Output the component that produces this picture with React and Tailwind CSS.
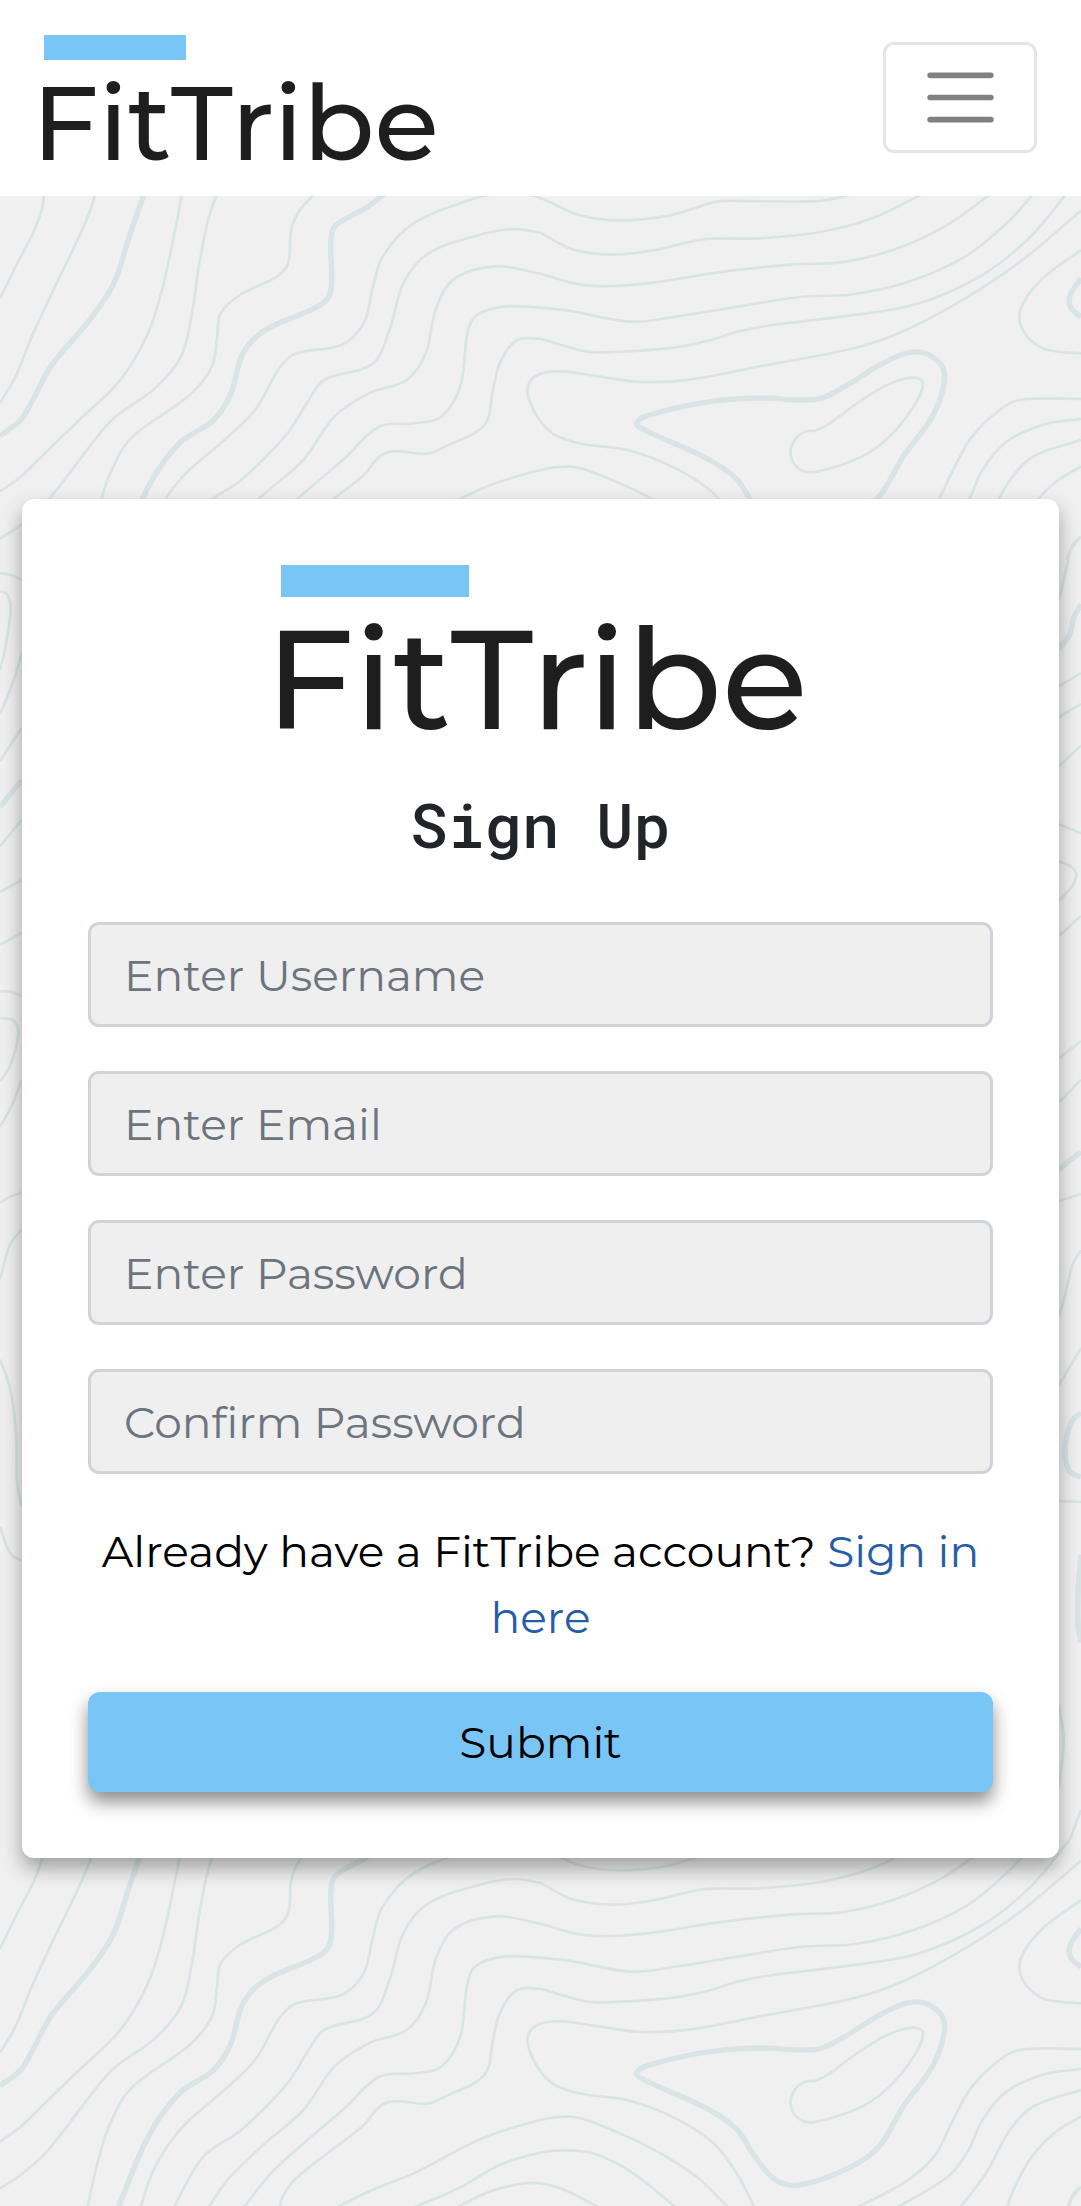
import React from "react";

// Contour lines of the topographic backdrop, as points on one tile.
const THIN = [
  [[130, 0], [122, 55], [100, 120], [50, 220], [0, 326]],
  [[280, 0], [262, 60], [225, 150], [150, 310], [90, 445], [45, 560], [0, 638]],
  [[530, 0], [510, 110], [470, 300], [425, 440], [345, 575], [230, 690], [130, 790], [60, 860], [0, 905]],
  [[634, 0], [605, 85], [580, 210], [555, 380], [525, 500], [450, 595], [330, 685], [260, 770], [140, 930], [60, 1005], [0, 1045], [-60, 1080]],
  [[925, 0], [870, 60], [845, 120], [836, 220], [800, 262], [700, 312], [640, 370], [630, 440], [615, 530], [550, 615], [380, 745], [320, 850], [285, 960], [250, 1120]],
  [[1450, 10], [1380, 24], [1200, 100], [1110, 200], [1080, 300], [1055, 400], [990, 465], [860, 490], [810, 535], [740, 660], [640, 760], [530, 860], [450, 980], [405, 1110]],
  [[1520, 10], [1568, 24], [1680, 75], [1800, 91], [1940, 77], [2080, 35], [2150, 33], [2360, 34], [2420, 26], [2500, 5]],
  [[1568, 128], [1490, 117], [1400, 132], [1240, 192], [1170, 280], [1130, 420], [1080, 522], [940, 570], [890, 640], [830, 735], [700, 870], [590, 950], [500, 1110]],
  [[1568, 128], [1660, 178], [1780, 194], [1900, 180], [2040, 148], [2200, 145], [2380, 126], [2530, 85], [2690, 5]],
  [[1568, 251], [1440, 229], [1320, 265], [1265, 355], [1235, 490], [1180, 570], [1070, 610], [970, 680], [880, 810], [760, 918], [660, 1020], [600, 1110]],
  [[1568, 251], [1680, 283], [1780, 288], [1900, 277], [2100, 245], [2300, 223], [2440, 217], [2590, 180], [2740, 110], [2890, 0]],
  [[1568, 353], [1460, 350], [1380, 378], [1356, 430], [1335, 590], [1280, 680], [1200, 700], [1100, 710], [1000, 805], [800, 985], [700, 1110]],
  [[1568, 353], [1650, 362], [1830, 395], [1960, 380], [2140, 350], [2320, 321], [2480, 312], [2640, 274], [2800, 200], [2920, 100], [3008, 0]],
  [[1568, 446], [1500, 450], [1450, 520], [1430, 600], [1405, 705], [1290, 770], [1240, 791], [1120, 788], [1050, 860], [870, 1005], [825, 1060], [805, 1120]],
  [[1568, 446], [1700, 484], [1780, 486], [1960, 472], [2070, 448], [2140, 425], [2240, 405], [2440, 380], [2660, 342], [2850, 255], [2990, 140], [3110, -10]],
  [[3136, 62], [2960, 215], [2800, 325], [2620, 424], [2480, 474], [2200, 530], [2000, 569], [1860, 576], [1740, 560], [1630, 544], [1568, 551], [1534, 580], [1534, 625], [1568, 694], [1610, 735], [1690, 762], [1820, 780], [1960, 835], [2070, 910], [2140, 1005], [2195, 1115]],
  [[960, 1110], [1080, 1050], [1200, 1000], [1400, 895], [1568, 840], [1650, 830], [1710, 843], [1880, 920], [2020, 1010], [2120, 1110]],
  [[1180, 1110], [1330, 1045], [1450, 975], [1568, 938], [1640, 931], [1720, 940], [1830, 995], [1970, 1110]],
  [[1310, 1110], [1420, 1055], [1520, 1030], [1580, 1032], [1650, 1055], [1750, 1110]],
  [[3136, 180], [3020, 270], [2960, 360], [2970, 425], [3020, 473], [3070, 485], [3136, 490]],
  [[3136, 627], [2980, 627], [2920, 645], [2820, 740], [2760, 850], [2710, 950], [2620, 1030], [2470, 1110]],
  [[3136, 687], [3030, 703], [2920, 755], [2850, 840], [2810, 930], [2750, 1010], [2580, 1115]],
  [[3136, 750], [3000, 798], [2930, 870], [2860, 1000], [2780, 1110]],
  [[3136, 829], [3060, 878], [2990, 955], [2940, 1050], [2915, 1120]],
  [[3136, 1040], [3105, 1080], [3095, 1110]],
  [[2336, 725], [2365, 722], [2400, 705], [2500, 630], [2580, 582], [2650, 563], [2678, 580], [2650, 650], [2580, 740], [2500, 800], [2370, 845], [2320, 838], [2294, 795], [2305, 750], [2336, 725]],
  [[0, 1150], [30, 1154], [63, 1170]],
  [[0, 1204], [19, 1211], [31, 1256], [15, 1375], [0, 1441]],
  [[0, 1573], [40, 1470], [63, 1388]],
  [[0, 1713], [63, 1613]],
  [[0, 1969], [63, 1890]],
  [[0, 2106], [63, 2070]],
  [[0, 2265], [63, 2228]],
  [[0, 2405], [30, 2405], [63, 2418]],
  [[0, 2484], [39, 2492], [53, 2532], [29, 2629], [0, 2674]],
  [[0, 2811], [35, 2745], [63, 2669]],
  [[0, 3038], [30, 3020], [63, 3007]],
  [[0, 3268], [29, 3165], [63, 3118]],
  [[0, 3508], [29, 3593], [46, 3725], [50, 3883], [63, 3949]],
  [[0, 4010], [29, 4089], [63, 4113]],
  [[3072, 1230], [3093, 1138], [3112, 1064], [3136, 1040]],
  [[3072, 1489], [3136, 1449]],
  [[3072, 1581], [3136, 1542]],
  [[3072, 1729], [3136, 1666]],
  [[3072, 1903], [3136, 1930]],
  [[3072, 2014], [3107, 2030], [3123, 2056], [3107, 2093], [3072, 2133]],
  [[3072, 2238], [3136, 2178]],
  [[3072, 2605], [3136, 2553]],
  [[3072, 2737], [3136, 2669]],
  [[3072, 3033], [3136, 3012]],
  [[3072, 3382], [3093, 3302], [3112, 3223], [3136, 3181]],
  [[3072, 3585], [3136, 3474]],
  [[3072, 3933], [3136, 3936]],
  [[3072, 4543], [3086, 4649], [3072, 4794]],
  [[3100, 4960], [3136, 4860]],
];

const THICK = [
  [[422, 0], [375, 140], [330, 280], [260, 390], [150, 525], [95, 630], [60, 690], [0, 738]],
  [[1130, 0], [1060, 55], [975, 105], [960, 150], [960, 300], [930, 345], [770, 420], [705, 490], [670, 610], [620, 690], [520, 760], [430, 890], [340, 1110]],
  [[1900, 670], [2060, 635], [2200, 624], [2370, 628], [2450, 590], [2560, 520], [2640, 487], [2700, 497], [2740, 550], [2710, 670], [2620, 800], [2550, 920], [2460, 985], [2320, 1035], [2250, 1020], [2190, 950], [2135, 865], [2040, 800], [1870, 720], [1848, 697], [1900, 670]],
  [[3136, 265], [3104, 318], [3106, 352], [3136, 382]],
  [[0, 1850], [63, 1771]],
  [[3072, 1375], [3102, 1336], [3115, 1283], [3136, 1243]],
  [[3072, 2938], [3136, 2885]],
  [[3136, 3667], [3107, 3698], [3090, 3778], [3102, 3844], [3136, 3862]],
  [[3136, 4094], [3128, 4200], [3128, 4306], [3136, 4358]],
];

// Catmull-Rom spline through the points, written as cubic Béziers.
function smooth(points) {
  const closed =
    points.length > 4 &&
    points[0][0] === points[points.length - 1][0] &&
    points[0][1] === points[points.length - 1][1];
  const n = points.length;
  const at = (i) => {
    if (closed) return points[(i + n - 1) % (n - 1)];
    return points[Math.max(0, Math.min(n - 1, i))];
  };
  let d = `M${points[0][0]} ${points[0][1]}`;
  for (let i = 0; i < n - 1; i++) {
    const [a, b, c, e] = [at(i - 1), at(i), at(i + 1), at(i + 2)];
    const chord = Math.hypot(c[0] - b[0], c[1] - b[1]);
    const control = (p, q, near, sign) => {
      const len = Math.hypot(q[0] - p[0], q[1] - p[1]) || 1;
      const k = (sign * chord) / 3 / len;
      return [near[0] + (q[0] - p[0]) * k, near[1] + (q[1] - p[1]) * k];
    };
    const c1 = control(a, c, b, 1);
    const c2 = control(b, e, c, -1);
    d += `C${c1[0].toFixed(1)} ${c1[1].toFixed(1)} ${c2[0].toFixed(1)} ${c2[1].toFixed(1)} ${c[0]} ${c[1]}`;
  }
  return d;
}

function Topography() {
  return (
    <svg className="absolute inset-0 h-full w-full" aria-hidden="true">
      <defs>
        <pattern
          id="topography"
          width="3136"
          height="4950"
          patternUnits="userSpaceOnUse"
          patternTransform="translate(0 190) scale(0.3447 0.33333)"
        >
          <g fill="none" stroke="#d9e4e6" strokeLinejoin="round">
            {THIN.map((points, i) => (
              <path key={i} d={smooth(points)} strokeWidth="8" />
            ))}
            {THICK.map((points, i) => (
              <path key={i} d={smooth(points)} strokeWidth="16" />
            ))}
          </g>
        </pattern>
      </defs>
      <rect width="100%" height="100%" fill="url(#topography)" />
    </svg>
  );
}

function NavLogo() {
  return (
    <a href="#" className="block text-[#1e1e1e]" aria-label="FitTribe home">
      <span className="block h-[25px] w-[142px] bg-[#79c5f6]" />
      <span className="-ml-3 mt-3 block text-[105px] leading-[100px] font-medium">FitTribe</span>
    </a>
  );
}

function CardLogo() {
  return (
    <div className="mx-auto w-fit text-[#1e1e1e]">
      <div className="h-8 w-[188px] bg-[#79c5f6]" />
      <div className="-mr-2 -ml-4 mt-4 text-[140px] leading-[132px] font-medium">FitTribe</div>
    </div>
  );
}

const FIELDS = [
  { id: "username", type: "text", label: "Enter Username" },
  { id: "email", type: "email", label: "Enter Email" },
  { id: "password", type: "password", label: "Enter Password" },
  { id: "confirm", type: "password", label: "Confirm Password" },
];

export default function App() {
  return (
    <div className="relative min-h-screen bg-[#f0f0f0] font-['Montserrat','Inter',sans-serif] text-[44px] leading-[66px] text-black">
      <Topography />
      <header className="relative flex h-[196px] items-start justify-between bg-white px-11">
        <div className="pt-[35px]">
          <NavLogo />
        </div>
        <button
          type="button"
          aria-label="Toggle navigation"
          className="mt-[42px] flex h-[111px] w-[154px] items-center justify-center rounded-[11px] border-3 border-[#e5e5e5]"
        >
          <svg viewBox="0 0 30 30" className="h-[83px] w-[83px]" aria-hidden="true">
            <path
              d="M4 7h22M4 15h22M4 23h22"
              fill="none"
              stroke="#808080"
              strokeWidth="2"
              strokeLinecap="round"
              strokeMiterlimit="10"
            />
          </svg>
        </button>
      </header>
      <main className="relative px-[22px] pt-[303px] pb-[348px]">
        <section className="rounded-xl bg-white p-[66px] shadow-[0_10px_20px_rgba(0,0,0,0.34)]">
          <CardLogo />
          <h1 className="mt-[42px] text-center font-['Roboto_Mono','DejaVu_Sans_Mono',monospace] text-[62px] leading-[74px] font-medium text-[#212529]">
            Sign Up
          </h1>
          <form className="mt-[61px]" onSubmit={(e) => e.preventDefault()}>
            <div className="flex flex-col gap-11">
              {FIELDS.map((f) => (
                <input
                  key={f.id}
                  id={f.id}
                  type={f.type}
                  aria-label={f.label}
                  placeholder={f.label}
                  className="h-[105px] w-full rounded-[11px] border-3 border-[#ced4da] bg-[#efefef] px-[33px] placeholder:text-[#6c757d]"
                />
              ))}
            </div>
            <p className="mt-11 text-center">
              Already have a FitTribe account?{" "}
              <a href="#" className="text-[#275da6]">
                Sign in here
              </a>
            </p>
            <button
              type="submit"
              className="mt-[42px] h-[100px] w-full rounded-xl bg-[#79c5f6] shadow-[0_10px_18px_rgba(0,0,0,0.45)]"
            >
              Submit
            </button>
          </form>
        </section>
      </main>
    </div>
  );
}
